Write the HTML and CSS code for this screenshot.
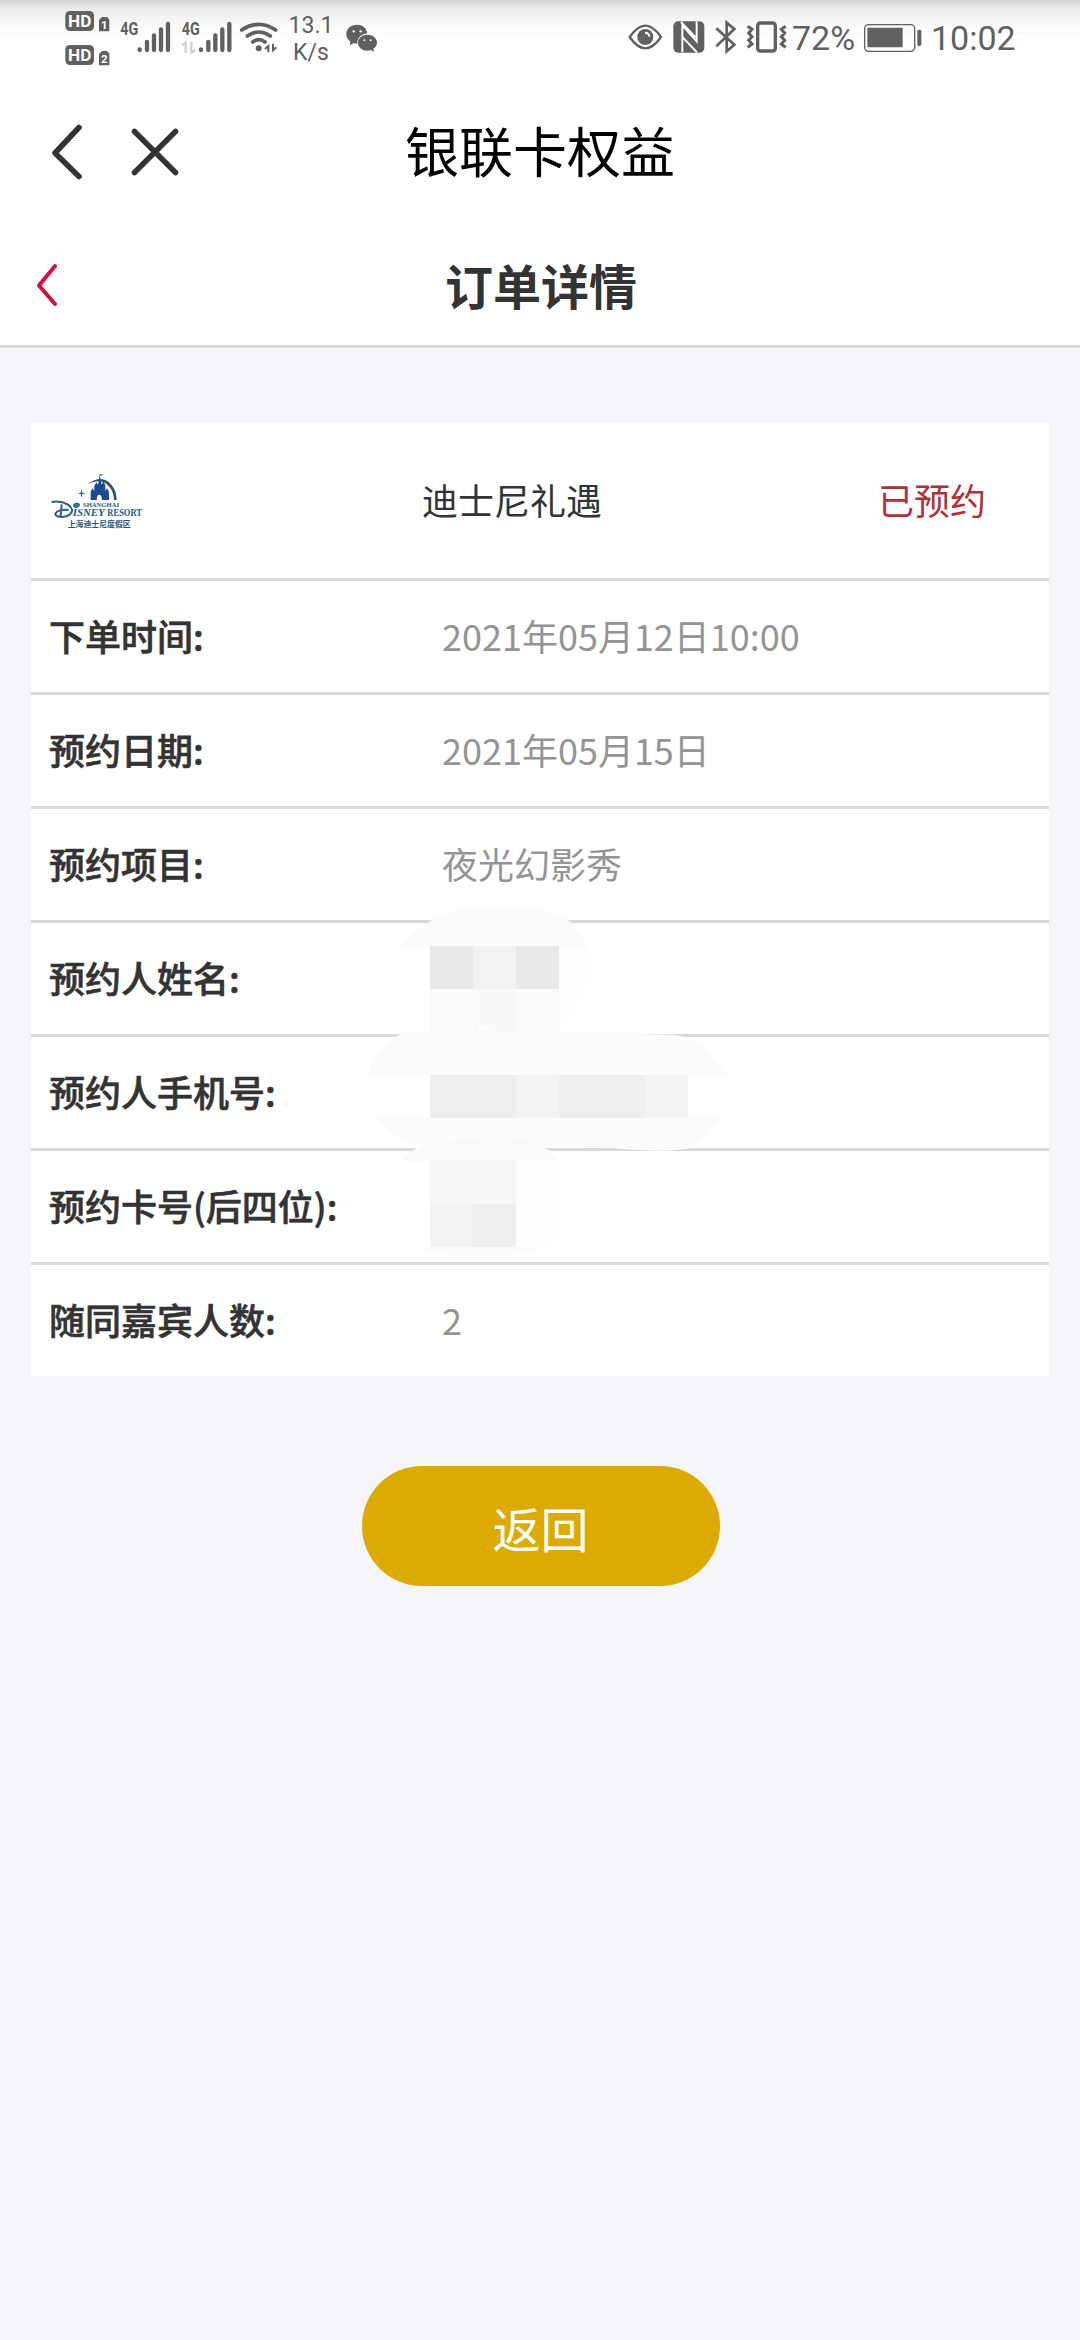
FILE: index.html
```html
<!DOCTYPE html>
<html lang="zh-CN">
<head>
<meta charset="utf-8">
<title>银联卡权益</title>
<link rel="stylesheet" href="styles.css">
</head>
<body>
<div class="status">
  <svg class="status-network" viewBox="0 0 720 240">
    <!-- HD badges -->
    <g fill="#606060">
      <rect x="76" y="33" width="86" height="60" rx="14"/>
      <rect x="76" y="135" width="86" height="60" rx="14"/>
      <path d="M186 51h15l7 8v35h-31V60z"/>
      <path d="M186 153h15l7 8v35h-31v-34z"/>
    </g>
    <g class="badge-text">
      <text x="119" y="81" font-size="50" textLength="70" lengthAdjust="spacingAndGlyphs">HD</text>
      <text x="119" y="183" font-size="50" textLength="70" lengthAdjust="spacingAndGlyphs">HD</text>
      <text x="193" y="88" font-size="34">1</text>
      <text x="193" y="190" font-size="34">2</text>
    </g>
    <!-- signal strength -->
    <g class="net-text">
      <text x="241" y="106" textLength="54" lengthAdjust="spacingAndGlyphs">4G</text>
      <text x="425" y="106" textLength="54" lengthAdjust="spacingAndGlyphs">4G</text>
    </g>
    <g stroke="#606060" stroke-width="13" stroke-linecap="round">
      <path d="M299 148v2M321 126v24M342 106v44M363 88v62M384 72v78"/>
      <path d="M483 148v2M505 126v24M526 106v44M547 88v62M568 72v78"/>
    </g>
    <path d="M426 136l11-8v31M466 150l-12 8v-32" fill="none" stroke="#cfcfcf" stroke-width="7"/>
    <!-- wifi -->
    <g fill="none" stroke="#606060" stroke-width="11" stroke-linecap="round">
      <path d="M605 90q52-34 102 0M622 108q35-24 69 0M638 126q19-14 37 0"/>
    </g>
    <circle cx="656" cy="145" r="9" fill="#606060"/>
    <path d="M675 147l10-9v19M709 142l-10 9v-20" fill="none" stroke="#606060" stroke-width="6"/>
  </svg>
  <div class="speed"><span>13.1</span><span>K/s</span></div>
  <svg class="wechat" viewBox="0 0 96 84">
    <path fill="#606060" d="M33 2C15 2 1 14 1 30c0 9 4 17 12 22l-2 12 12-7q5 2 11 2C33 42 46 30 64 28 62 12 49 2 33 2z"/>
    <path fill="#606060" d="M65 32C48 32 36 42 36 56s12 24 29 24q5 0 9-2l10 5-2-9c7-5 11-11 11-18 0-14-13-24-28-24z"/>
    <g fill="#fff"><circle cx="23" cy="22" r="3.5"/><circle cx="44" cy="22" r="3.5"/><circle cx="55" cy="49" r="3"/><circle cx="74" cy="49" r="3"/></g>
  </svg>
  <svg class="status-icons" viewBox="84 0 480 240">
    <!-- eye -->
    <path d="M89 111Q136 43 183 111 136 179 89 111z" fill="none" stroke="#606060" stroke-width="7"/>
    <circle cx="136" cy="111" r="24" fill="#606060"/>
    <path d="M135 98q12 0 13 12" fill="none" stroke="#fff" stroke-width="6"/>
    <!-- nfc -->
    <rect x="220" y="64" width="93" height="94" rx="15" fill="#606060"/>
    <path d="M247 157V76l43 48V64M243 66l44 46M247 111l44 46" fill="none" stroke="#fff" stroke-width="6"/>
    <!-- bluetooth -->
    <path d="M349 85l54 49-23 20V68l23 19-54 52" fill="none" stroke="#606060" stroke-width="8"/>
    <!-- vibrate -->
    <rect x="473" y="69" width="53" height="84" rx="8" fill="none" stroke="#606060" stroke-width="10"/>
    <path d="M443 79l13 9-10 11 10 11-10 11 10 11-13 10M557 79l-13 9 10 11-10 11 10 11-10 11 13 10" fill="none" stroke="#606060" stroke-width="9"/>
  </svg>
  <span class="percent">72%</span>
  <svg class="battery" viewBox="0 0 174 84">
    <rect x="2" y="2" width="150" height="80" rx="12" fill="none" stroke="#606060" stroke-width="4"/>
    <rect x="10" y="11" width="106" height="59" rx="3" fill="#606060"/>
    <rect x="160" y="17" width="12" height="49" rx="5" fill="#606060"/>
  </svg>
  <span class="clock">10:02</span>
</div>

<header class="app-bar">
  <div class="app-actions">
    <svg class="icon-back" viewBox="0 0 34 56"><path d="M30 3.500L6 29l24 23.500"/></svg>
    <svg class="icon-close" viewBox="0 0 50 50"><path d="M4.500 4.500l41 41M45.500 4.500l-41 41"/></svg>
  </div>
  <h1>银联卡权益</h1>
</header>
<header class="page-bar">
  <svg class="icon-prev" viewBox="0 0 24 46"><path d="M20 4L4 23.500l16 18.500"/></svg>
  <h2>订单详情</h2>
</header>

<main>
  <section class="card">
    <div class="summary">
      <svg class="logo" viewBox="84 201 288 192">
        <path d="M202 247q47-34 75 5 13 17 13 42h-8q-1-24-13-38-22-32-67-9z" fill="#31536d"/>
        <path d="M212 294v-24l6-12 5 9v-15l6-11 5 8 5-31 6 30 5-10 6 12v17l5-9 6 13v23h-21q-1-16-8-16t-8 16z" fill="#194b91"/>
        <path d="M172 274l10-2 2-10 3 10 11 2-11 2-3 11-2-11zM235 219l8-2 8 2-8 2z" fill="#31658e"/>
        <path d="M95 300q27-5 49 8 21 15 6 29-17 13-40 5-11-8 8-16 12-4 28-2M125 307l-3 38" fill="none" stroke="#315f82" stroke-width="6"/>
        <path d="M176 305q-13-2-15 6 2 7 12 4 6-3 4-8l-15 6" fill="none" stroke="#245b86" stroke-width="4"/>
        <g class="logo-text">
          <text x="189" y="314" font-size="21" textLength="108" lengthAdjust="spacingAndGlyphs">SHANGHAI</text>
          <text x="158" y="343" font-size="29" font-style="italic" textLength="96" lengthAdjust="spacingAndGlyphs">ISNEY</text>
          <text x="262" y="343" font-size="28" textLength="104" lengthAdjust="spacingAndGlyphs">RESORT</text>
          <text class="logo-cn" x="143" y="375" font-size="24" textLength="189" lengthAdjust="spacingAndGlyphs">上海迪士尼度假区</text>
        </g>
      </svg>
      <span class="product">迪士尼礼遇</span>
      <span class="state">已预约</span>
    </div>
    <dl>
      <div class="row"><dt>下单时间:</dt><dd>2021年05月12日10:00</dd></div>
      <div class="row"><dt>预约日期:</dt><dd>2021年05月15日</dd></div>
      <div class="row"><dt>预约项目:</dt><dd>夜光幻影秀</dd></div>
      <div class="row"><dt>预约人姓名:</dt><dd></dd></div>
      <div class="row"><dt>预约人手机号:</dt><dd></dd></div>
      <div class="row"><dt>预约卡号(后四位):</dt><dd></dd></div>
      <div class="row"><dt>随同嘉宾人数:</dt><dd>2</dd></div>
    </dl>
    <!-- mosaic over the private values -->
    <svg class="mosaic" viewBox="0 0 1260 1140">
      <path fill="#fbfbfb" d="M184 138Q215 95 275 62 350 20 430 20q60 0 98 10 100-6 157 32 40 30 58 76z"/>
      <path fill="#fefefe" d="M657 138h86q35 130-75 238h-11z"/>
      <path fill="#e9e9e9" d="M270 138h129v129H270zM528 138h129v129H528z"/>
      <path fill="#f2f2f2" d="M399 138h129v129H399z"/>
      <path fill="#fbfbfb" d="M270 267h387v129H270z"/>
      <path fill="#f8f8f8" d="M399 267h129v129H399z"/>
      <path fill="#fff" d="M407 387l21-11 23 11z"/>
      <path fill="#fbfbfb" d="M84 525q20-85 96-122l10-7h680l45 7 90 2q105 15 152 120z"/>
      <path fill="#fff" d="M84 525h1073q14 60-12 129H110Q75 590 84 525z"/>
      <path fill="#eee" d="M270 525h258v129H270zM657 525h258v129H657z"/>
      <path fill="#f3f3f3" d="M528 525h129v129H528zM915 525h129v129H915z"/>
      <path fill="#fbfbfb" d="M110 654h1036q-45 68-102 92-95 12-230-2-160-10-230-8H240q-90-20-130-82z"/>
      <path fill="#f9f9f9" d="M184 783q20-25 46-39l40-18q100-6 150-10 100-4 160 9 50 18 77 58z"/>
      <path fill="#fffffd" d="M184 783h86v258h-50q-100-120-36-258z"/>
      <path fill="#f7f7f7" d="M270 783h258v129H270z"/>
      <path fill="#f2f2f2" d="M270 912h129v129H270z"/>
      <path fill="#eee" d="M399 912h129v129H399z"/>
      <path fill="#fdfdfd" d="M528 783h129v220q-20 25-58 38h-71z"/>
      <path fill="#fbfbfb" d="M221 1041h378q-40 25-90 23-180 18-288-23z"/>
    </svg>
  </section>
  <button class="return" type="button">返回</button>
</main>
</body>
</html>
```
FILE: styles.css
```css
* { box-sizing: border-box; }
body {
  margin: 0;
  width: 1080px;
  height: 2340px;
  display: flex;
  flex-direction: column;
  background: #f6f6fa;
  color: #333;
  font-family: "Noto Sans CJK SC", sans-serif;
  overflow: hidden;
}
svg { display: block; flex: none; }
h1, h2, dl, dd { margin: 0; }

.status {
  height: 80px;
  display: flex;
  align-items: flex-start;
  padding-left: 40px;
  background: linear-gradient(#d2d2d2, #ececec 9px, #fafafa 26px, #fff 38px);
  color: #606060;
  font-family: Roboto, sans-serif;
}
.status-network { width: 240px; height: 80px; }
.badge-text { fill: #fff; font-weight: 700; text-anchor: middle; }
.net-text { fill: #606060; font-weight: 700; font-size: 56px; }
.speed {
  width: 66px;
  padding-top: 12px;
  display: flex;
  flex-direction: column;
  align-items: center;
  font-size: 23px;
  line-height: 27px;
  margin-left: -2px;
}
.wechat { width: 32px; height: 28px; margin: 24px 0 0 2px; }
.status-icons { width: 160px; height: 80px; margin-left: 250px; }
.percent, .clock { font-size: 34px; line-height: 40px; padding-top: 18px; }
.percent { width: 72px; margin-left: 4px; }
.battery { width: 58px; height: 28px; margin-top: 24px; }
.clock { margin-left: 9px; }

.app-bar {
  height: 144px;
  display: grid;
  grid-template-columns: 1fr auto 1fr;
  align-items: center;
  padding: 0 49px;
  background: #fff;
}
.app-actions { display: flex; align-items: center; gap: 47px; }
.app-bar path { fill: none; stroke: #333; stroke-width: 5.500; stroke-linecap: round; stroke-linejoin: round; }
.icon-back { width: 34px; height: 56px; }
.icon-close { width: 50px; height: 50px; }
h1 { padding-bottom: 4px; color: #000; font-size: 54px; font-weight: 400; line-height: 80px; }

.page-bar {
  height: 124px;
  display: grid;
  grid-template-columns: 1fr auto 1fr;
  align-items: center;
  padding: 0 33px 0 35px;
  background: #fff;
  border-bottom: 3px solid #d9d9d9;
}
.icon-prev { width: 24px; height: 46px; }
.icon-prev path { fill: none; stroke: #cf1145; stroke-width: 4; stroke-linecap: round; stroke-linejoin: round; }
h2 { padding-bottom: 2px; font-size: 48px; font-weight: 700; line-height: 70px; }

main { display: flex; flex-direction: column; align-items: center; padding-top: 75px; }
.card { position: relative; width: 1018px; background: #fff; font-size: 36px; line-height: 54px; }
.summary {
  height: 155px;
  display: grid;
  grid-template-columns: 374px 456px 1fr;
  align-items: center;
  padding-left: 17px;
}
.product, .state { padding-bottom: 4px; }
.logo { width: 96px; height: 64px; }
.logo-text { fill: #28577f; font-family: "Liberation Serif", serif; font-weight: 700; }
.logo-cn { font-family: "Noto Sans CJK SC", sans-serif; }
.state { color: #b12f37; }
.row {
  height: 114px;
  display: grid;
  grid-template-columns: 393px 1fr;
  align-items: center;
  padding: 0 0 3px 18px;
  border-top: 3px solid #d9d9dc;
}
dt { font-weight: 500; -webkit-text-stroke: 0.6px #333; }
dd { color: #949494; }
.mosaic { position: absolute; left: 309px; top: 477px; width: 420px; height: 380px; }

.return {
  width: 358px;
  height: 120px;
  margin-top: 90px;
  margin-left: 1px;
  padding: 1px 0 0;
  border: 0;
  border-radius: 60px;
  background: #dcaa00;
  color: #fff;
  font: 400 48px/70px "Noto Sans CJK SC", sans-serif;
}
```
